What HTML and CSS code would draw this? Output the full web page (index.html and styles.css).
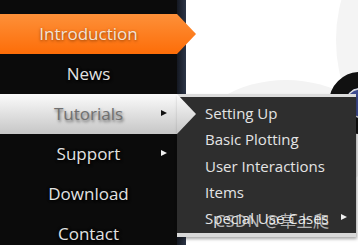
FILE: index.html
```html
<!DOCTYPE html>
<html>
<head>
<meta charset="utf-8">
<link rel="stylesheet" href="styles.css">
</head>
<body>
<div class="page">
  <nav class="sidebar">
    <ul class="menu">
      <li class="item active">Introduction</li>
      <li class="item">News</li>
      <li class="item open">Tutorials<span class="caret"></span>
        <ul class="submenu">
          <li>Setting Up</li>
          <li>Basic Plotting</li>
          <li>User Interactions</li>
          <li>Items</li>
          <li class="sub-more">Special Use Cases<span class="caret light"></span></li>
        </ul>
      </li>
      <li class="item">Support<span class="caret light"></span></li>
      <li class="item">Download</li>
      <li class="item">Contact</li>
    </ul>
  </nav>
  <div class="edge"></div>
  <main class="content">
    <div class="swoosh"></div>
    <div class="swoosh2"></div>
    <div class="logo"></div>
  </main>
</div>
<div class="watermark">CSDN @草上爬</div>
</body>
</html>
```

FILE: styles.css
```css
html, body {
  margin: 0;
  padding: 0;
  background: #fff;
  width: 358px;
  height: 245px;
  overflow: hidden;
  font-family: "Open Sans", "Noto Sans", sans-serif;
}
.page {
  display: flex;
  height: 245px;
  position: relative;
}
.sidebar {
  width: 177px;
  background: #0b0b0b;
  padding-top: 14px;
  position: relative;
  z-index: 2;
}
.menu {
  list-style: none;
  margin: 0;
  padding: 0;
}
.item {
  position: relative;
  height: 40px;
  line-height: 40px;
  text-align: center;
  font-size: 17px;
  color: #e2e2e2;
  text-shadow: 0 0 3px #000, 1px 1px 3px #000;
}
.item.active {
  background: linear-gradient(#fd9039, #fd6d08);
  color: #f3e3d6;
  text-shadow: 0 1px 3px rgba(120,50,0,0.9);
}
.item.active::after,
.item.open::after {
  content: "";
  position: absolute;
  top: 0;
  right: -19px;
  width: 19px;
  height: 40px;
  clip-path: polygon(0 0, 100% 50%, 0 100%);
  z-index: 5;
}
.item.active::after {
  background: linear-gradient(#fd9039, #fd6d08);
}
.item.open {
  background: linear-gradient(#fbfbfb, #c6c6c6);
  color: #707070;
  text-shadow: 1px 2px 3px rgba(0,0,0,0.55);
}
.item.open::after {
  background: linear-gradient(#fbfbfb, #c6c6c6);
}
.caret {
  position: absolute;
  left: 161px;
  top: 16px;
  width: 0;
  height: 0;
  border-left: 6px solid #111;
  border-top: 3.5px solid transparent;
  border-bottom: 3.5px solid transparent;
}
.caret.light {
  border-left-color: #f0f0f0;
}
.submenu {
  position: absolute;
  left: 177px;
  top: 0;
  width: 179px;
  margin: 0;
  padding: 3px 0 2px 0;
  list-style: none;
  background: #2e2e2e;
  border-top: 3px solid #dcdcdc;
  border-bottom: 4px solid #d8d8d8;
  box-shadow: 1px 2px 3px rgba(0,0,0,0.35);
  text-align: left;
  z-index: 4;
  box-sizing: content-box;
}
.submenu li {
  position: relative;
  height: 26.3px;
  line-height: 26px;
  padding-left: 28px;
  font-size: 15px;
  color: #e4e4e4;
  text-shadow: none;
}
.submenu .caret {
  left: 164px;
  top: 9px;
}
.edge {
  width: 9px;
  background: linear-gradient(to right, #141821, #2c3547);
  position: relative;
  z-index: 1;
}
.content {
  flex: 1;
  position: relative;
  overflow: hidden;
  background: #fff;
}
.swoosh {
  position: absolute;
  left: 10px;
  top: 80px;
  width: 180px;
  height: 120px;
  border-radius: 50%;
  background: #f3f3f3;
}
.swoosh2 {
  position: absolute;
  left: 150px;
  top: -40px;
  width: 80px;
  height: 160px;
  border-radius: 50%;
  background: #f4f4f4;
}
.logo {
  position: absolute;
  left: 143px;
  top: 72px;
  width: 30px;
  height: 30px;
  border-radius: 50%;
  background: #3f4d92;
  border: 16px solid #111;
  box-shadow: inset 0 0 0 1.5px #ddd;
}
.watermark {
  position: absolute;
  left: 215px;
  top: 208px;
  font-size: 16px;
  font-family: "Noto Sans", "Noto Sans CJK SC", sans-serif;
  color: rgba(240,240,240,0.7);
  z-index: 10;
  letter-spacing: 0.6px;
}
```
